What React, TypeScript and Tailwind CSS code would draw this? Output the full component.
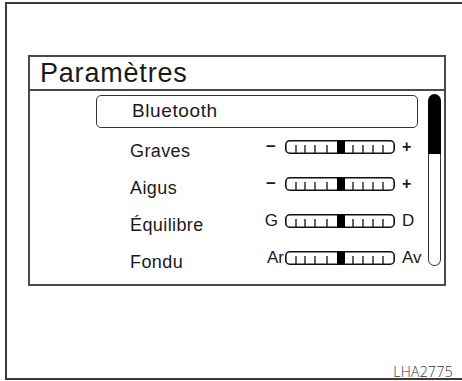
import React from "react";

const Slider = () => (
  <svg width="111" height="14" viewBox="0 0 111 14" className="block shrink-0">
    <rect x="0.8" y="0.8" width="108.4" height="12.4" rx="4" fill="white" stroke="#111" strokeWidth="1.6" />
    {[11, 20, 30, 42, 68, 78, 88, 98].map((x) => (
      <line key={x} x1={x} x2={x} y1="5" y2="13" stroke="#222" strokeWidth="1.4" />
    ))}
    <rect x="52" y="0.8" width="8" height="12.4" fill="#000" />
  </svg>
);

type RowProps = { label: string; left: string; right: string; leftPad: string; leftCls: string; rightCls: string };

const Row = ({ label, left, right, leftPad, leftCls, rightCls }: RowProps) => (
  <div className="flex h-[37px] items-center">
    <div className="w-[233px] pl-[100px] mt-[8px] text-[18px] leading-[22px] tracking-[0.4px] text-[#1a1a1a]">{label}</div>
    <div className={`w-[22px] text-right ${leftPad} ${leftCls} leading-[20px] text-[#1a1a1a]`}>{left}</div>
    <Slider />
    <div className={`ml-[6px] ${rightCls} leading-[20px] text-[#1a1a1a]`}>{right}</div>
  </div>
);

export default function App() {
  return (
    <div className="font-['Liberation_Sans',Arial,sans-serif] bg-white w-[462px] h-[381px] overflow-hidden">
      <div className="ml-[5px] mt-[2px] w-[457px] h-[378px] border-2 border-r-0 border-[#3a3a3a] flex flex-col">
        <div className="ml-[21px] mt-[51px] w-[418px] h-[231px] border-2 border-[#4a4a4a] flex flex-col">
          <div className="h-[34px] border-b-2 border-[#4a4a4a] pl-[10px] text-[27px] leading-[32px] tracking-[0.8px] text-[#1a1a1a]">
            Paramètres
          </div>
          <div className="flex flex-1">
            <div className="flex-1 flex flex-col pt-[4px]">
              <div className="ml-[66px] w-[322px] h-[33px] border-[1.5px] border-[#333] rounded-[5px] flex items-center pl-[35px] text-[19px] tracking-[0.6px] text-[#1a1a1a]">
                Bluetooth
              </div>
              <Row label="Graves" left="−" right="+" leftPad="pr-[9px]" leftCls="text-[17px] font-bold" rightCls="text-[16px] font-bold" />
              <Row label="Aigus" left="−" right="+" leftPad="pr-[9px]" leftCls="text-[17px] font-bold" rightCls="text-[16px] font-bold" />
              <Row label="Équilibre" left="G" right="D" leftPad="pr-[7px]" leftCls="text-[17px]" rightCls="text-[17px]" />
              <Row label="Fondu" left="Ar" right="Av" leftPad="pr-[1px]" leftCls="text-[17px]" rightCls="text-[17px]" />
            </div>
            <div className="mt-[3px] mr-[3px] w-[13px] h-[172px] flex flex-col">
              <div className="h-[60px] bg-black rounded-t-full rounded-b-[3px]" />
              <div className="flex-1 border-x-[1.5px] border-b-[1.5px] border-[#333] rounded-b-full" />
            </div>
          </div>
        </div>
        <div className="flex-1" />
        <div className="flex justify-end pr-[9px] font-['Open_Sans',sans-serif] font-light text-[14px] leading-[12px] tracking-[0.3px] text-[#333]">LHA2775</div>
      </div>
    </div>
  );
}
